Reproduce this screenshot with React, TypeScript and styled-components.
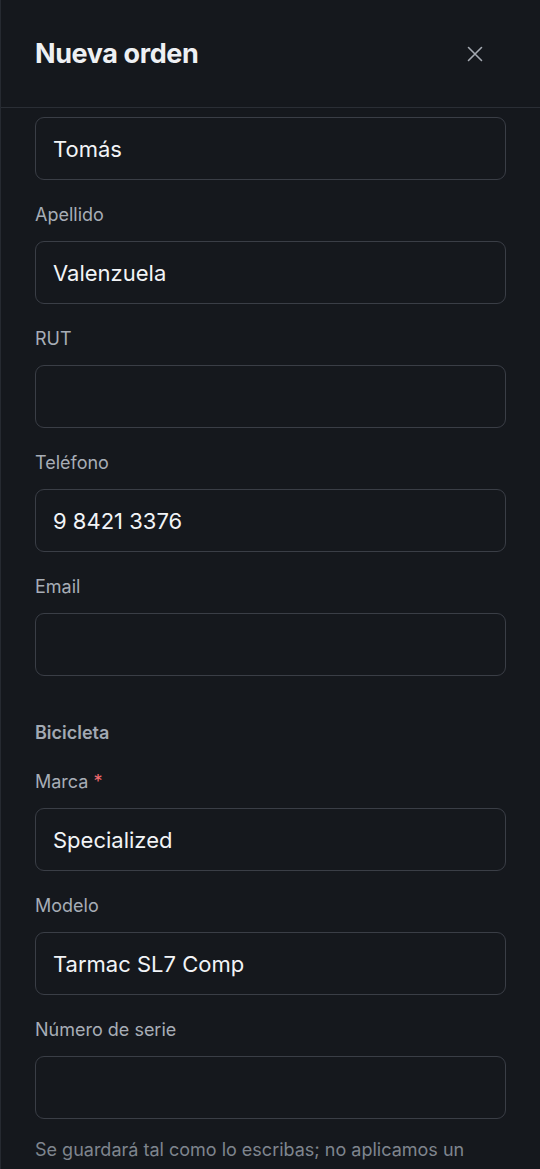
import React, { useLayoutEffect, useRef } from "react";
import styled, { createGlobalStyle } from "styled-components";

const Global = createGlobalStyle`
  html, body { margin: 0; padding: 0; background: #15181d; }
  body { font-family: Inter, "Noto Sans", "Liberation Sans", sans-serif; -webkit-font-smoothing: antialiased; }
  * { box-sizing: border-box; }
`;

const Panel = styled.div`
  width: 540px;
  height: 1169px;
  display: flex;
  flex-direction: column;
  background: #15181d;
  border-left: 1px solid #262a31;
  overflow: hidden;
`;

const Header = styled.header`
  flex: 0 0 108px;
  display: flex;
  align-items: center;
  justify-content: space-between;
  padding: 0 47px 0 34px;
  border-bottom: 1px solid #2a2e35;
`;

const Title = styled.h2`
  margin: 0;
  font-size: 27px;
  font-weight: 700;
  letter-spacing: -0.4px;
  color: #eef0f3;
`;

const CloseButton = styled.button`
  width: 36px;
  height: 36px;
  display: flex;
  align-items: center;
  justify-content: center;
  background: transparent;
  border: none;
  padding: 0;
  color: #a4a9b1;
  cursor: pointer;
`;

const Body = styled.div`
  flex: 1;
  overflow-y: auto;
  scrollbar-width: none;
  padding: 24px 34px 40px 34px;
  display: flex;
  flex-direction: column;
  &::-webkit-scrollbar { display: none; }
`;

const Field = styled.div`
  display: flex;
  flex-direction: column;
  gap: 16px;
  margin-bottom: 25px;
`;

const Label = styled.label`
  font-size: 18px;
  line-height: 20px;
  font-weight: 400;
  color: #a7adb6;
`;

const Required = styled.span`
  color: #f06a6f;
  margin-left: 5px;
`;

const Input = styled.input`
  width: 100%;
  height: 63px;
  padding: 0 17px;
  border-radius: 9px;
  border: 1px solid #3a3e46;
  background: #15181d;
  color: #f2f4f7;
  font-family: inherit;
  font-size: 22px;
  outline: none;
`;

const Section = styled.h3`
  margin: 22px 0 29px;
  font-size: 18px;
  line-height: 20px;
  font-weight: 600;
  color: #a2a9b3;
`;

const Help = styled.p`
  margin: -10px 0 0;
  font-size: 18px;
  line-height: 32px;
  color: #7f858e;
`;

type F = { label: string; value?: string; required?: boolean };

const person: F[] = [
  { label: "Nombre", value: "Tomás" },
  { label: "Apellido", value: "Valenzuela" },
  { label: "RUT" },
  { label: "Teléfono", value: "9 8421 3376" },
  { label: "Email" },
];

const bike: F[] = [
  { label: "Marca", value: "Specialized", required: true },
  { label: "Modelo", value: "Tarmac SL7 Comp" },
  { label: "Número de serie" },
];

const FieldRow = ({ f }: { f: F }) => (
  <Field>
    <Label>
      {f.label}
      {f.required && <Required>*</Required>}
    </Label>
    <Input defaultValue={f.value ?? ""} />
  </Field>
);

export default function App() {
  const ref = useRef<HTMLDivElement>(null);
  useLayoutEffect(() => {
    if (ref.current) ref.current.scrollTop = 51;
  }, []);
  return (
    <>
      <Global />
      <Panel>
        <Header>
          <Title>Nueva orden</Title>
          <CloseButton aria-label="Cerrar">
            <svg width="18" height="18" viewBox="0 0 18 18" fill="none" stroke="currentColor" strokeWidth="1.6" strokeLinecap="round">
              <path d="M2.5 2.5l13 13M15.5 2.5l-13 13" />
            </svg>
          </CloseButton>
        </Header>
        <Body ref={ref}>
          {person.map((f) => (
            <FieldRow key={f.label} f={f} />
          ))}
          <Section>Bicicleta</Section>
          {bike.map((f) => (
            <FieldRow key={f.label} f={f} />
          ))}
          <Help>Se guardará tal como lo escribas; no aplicamos un formato automático al número de serie.</Help>
        </Body>
      </Panel>
    </>
  );
}
